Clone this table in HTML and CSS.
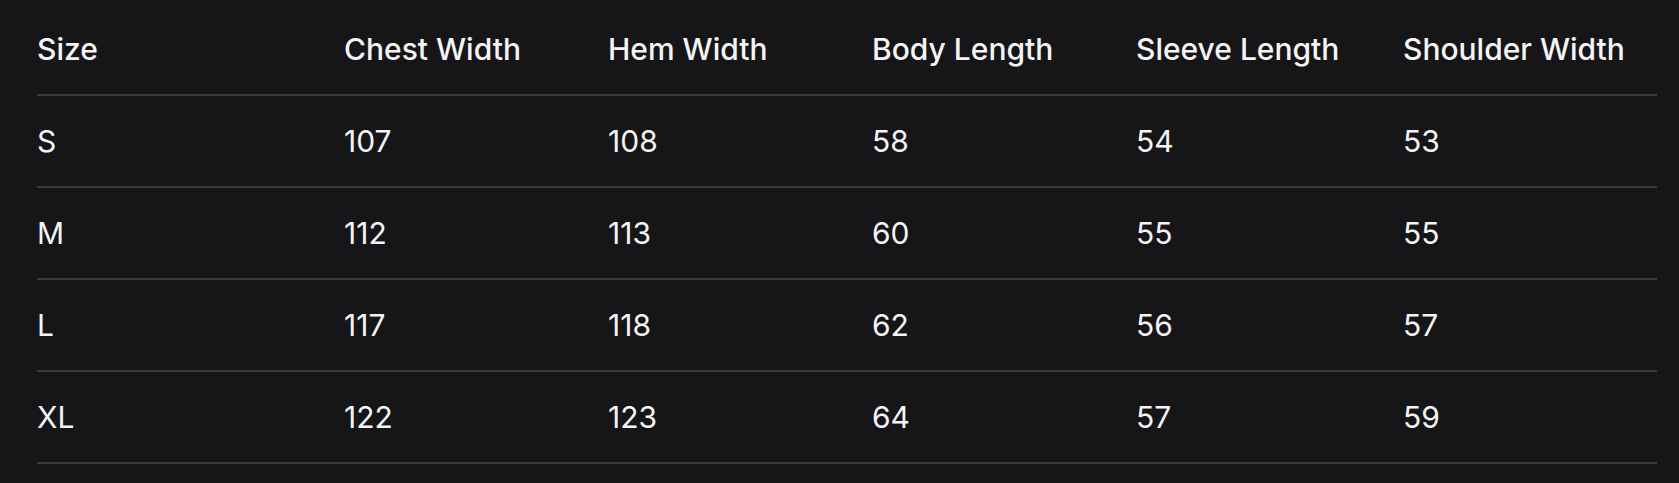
FILE: index.html
```html
<!DOCTYPE html>
<html lang="en">
<head>
<meta charset="utf-8">
<title>Size Chart</title>
<link rel="stylesheet" href="styles.css">
</head>
<body>
<div class="wrap">
  <table class="size-table">
    <thead>
      <tr>
        <th class="c1">Size</th>
        <th class="c2">Chest Width</th>
        <th class="c3">Hem Width</th>
        <th class="c4">Body Length</th>
        <th class="c5">Sleeve Length</th>
        <th class="c6">Shoulder Width</th>
      </tr>
    </thead>
    <tbody>
      <tr><td>S</td><td>107</td><td>108</td><td>58</td><td>54</td><td>53</td></tr>
      <tr><td>M</td><td>112</td><td>113</td><td>60</td><td>55</td><td>55</td></tr>
      <tr><td>L</td><td>117</td><td>118</td><td>62</td><td>56</td><td>57</td></tr>
      <tr><td>XL</td><td>122</td><td>123</td><td>64</td><td>57</td><td>59</td></tr>
    </tbody>
  </table>
</div>
</body>
</html>
```
FILE: styles.css
```css
html, body {
  margin: 0;
  padding: 0;
  background: #161618;
}
body {
  font-family: Inter, "Noto Sans", sans-serif;
  color: #f4f4f5;
}
.wrap {
  padding: 4px 22px 0 37px;
}
.size-table {
  width: 100%;
  border-collapse: collapse;
  table-layout: fixed;
  font-size: 30px;
  line-height: 40px;
}
.size-table th,
.size-table td {
  text-align: left;
  padding: 25px 0;
  border-bottom: 2px solid #3a3a3d;
  white-space: nowrap;
}
.size-table th {
  font-weight: 500;
}
.size-table td {
  font-weight: 400;
}
.c1 { width: 307px; }
.c2 { width: 264px; }
.c3 { width: 264px; }
.c4 { width: 264px; }
.c5 { width: 267px; }
.c6 { width: 254px; }
```
